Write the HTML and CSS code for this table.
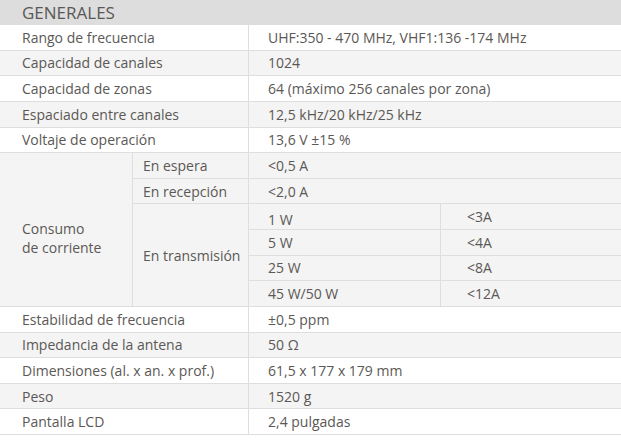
FILE: index.html
```html
<!DOCTYPE html>
<html lang="es">
<head>
<meta charset="utf-8">
<title>Generales</title>
<link rel="stylesheet" href="styles.css">
</head>
<body>
<div class="spec">
  <div class="head">GENERALES</div>

  <div class="label">Rango de frecuencia</div>
  <div class="value">UHF:350 - 470 MHz, VHF1:136 -174 MHz</div>

  <div class="label alt">Capacidad de canales</div>
  <div class="value alt">1024</div>

  <div class="label">Capacidad de zonas</div>
  <div class="value">64 (máximo 256 canales por zona)</div>

  <div class="label alt">Espaciado entre canales</div>
  <div class="value alt">12,5 kHz/20 kHz/25 kHz</div>

  <div class="label">Voltaje de operación</div>
  <div class="value">13,6 V ±15 %</div>

  <div class="group alt">Consumo<br>de corriente</div>
  <div class="sub alt">En espera</div>
  <div class="value alt">&lt;0,5 A</div>
  <div class="sub alt">En recepción</div>
  <div class="value alt">&lt;2,0 A</div>
  <div class="sub tx alt">En transmisión</div>
  <div class="power alt first">1 W</div>
  <div class="amp alt">&lt;3A</div>
  <div class="power alt">5 W</div>
  <div class="amp alt">&lt;4A</div>
  <div class="power alt">25 W</div>
  <div class="amp alt">&lt;8A</div>
  <div class="power alt">45 W/50 W</div>
  <div class="amp alt">&lt;12A</div>

  <div class="label">Estabilidad de frecuencia</div>
  <div class="value">±0,5 ppm</div>

  <div class="label alt">Impedancia de la antena</div>
  <div class="value alt">50 Ω</div>

  <div class="label">Dimensiones (al. x an. x prof.)</div>
  <div class="value">61,5 x 177 x 179 mm</div>

  <div class="label alt">Peso</div>
  <div class="value alt">1520 g</div>

  <div class="label">Pantalla LCD</div>
  <div class="value">2,4 pulgadas</div>
</div>
</body>
</html>
```

FILE: styles.css
```css
html, body {
  margin: 0;
  padding: 0;
  background: #ffffff;
}

.spec {
  width: 621px;
  display: grid;
  grid-template-columns: 133px 116px 192px 1fr;
  grid-template-rows: 25px repeat(16, 25.625px);
  font-family: "Open Sans", "Liberation Sans", sans-serif;
  font-size: 14px;
  color: #5b5855;
}

.spec > div {
  box-sizing: border-box;
  display: flex;
  align-items: center;
  border-bottom: 1px solid #dedede;
  background: #ffffff;
  white-space: nowrap;
  line-height: 19px;
}

.spec > .alt {
  background: #f4f4f4;
}

.spec > .head {
  grid-column: 1 / -1;
  background: #dcdddc;
  border-bottom: none;
  font-size: 17px;
  padding-left: 22px;
  color: #5a5856;
}

.label {
  grid-column: 1 / 3;
  padding-left: 22px;
  border-right: 1px solid #dedede;
}

.value {
  grid-column: 3 / 5;
  padding-left: 19px;
}

.spec > .group {
  grid-column: 1;
  grid-row: span 6;
  padding-left: 22px;
  padding-top: 16px;
  line-height: 19px;
  border-right: 1px solid #dedede;
}

.sub {
  grid-column: 2;
  padding-left: 10px;
  border-right: 1px solid #dedede;
}

.tx {
  grid-row: span 4;
}

.power {
  grid-column: 3;
  padding-left: 19px;
  border-right: 1px solid #dedede;
}

.power.first {
  padding-top: 5px;
}

.amp {
  grid-column: 4;
  padding-left: 26px;
}
```
